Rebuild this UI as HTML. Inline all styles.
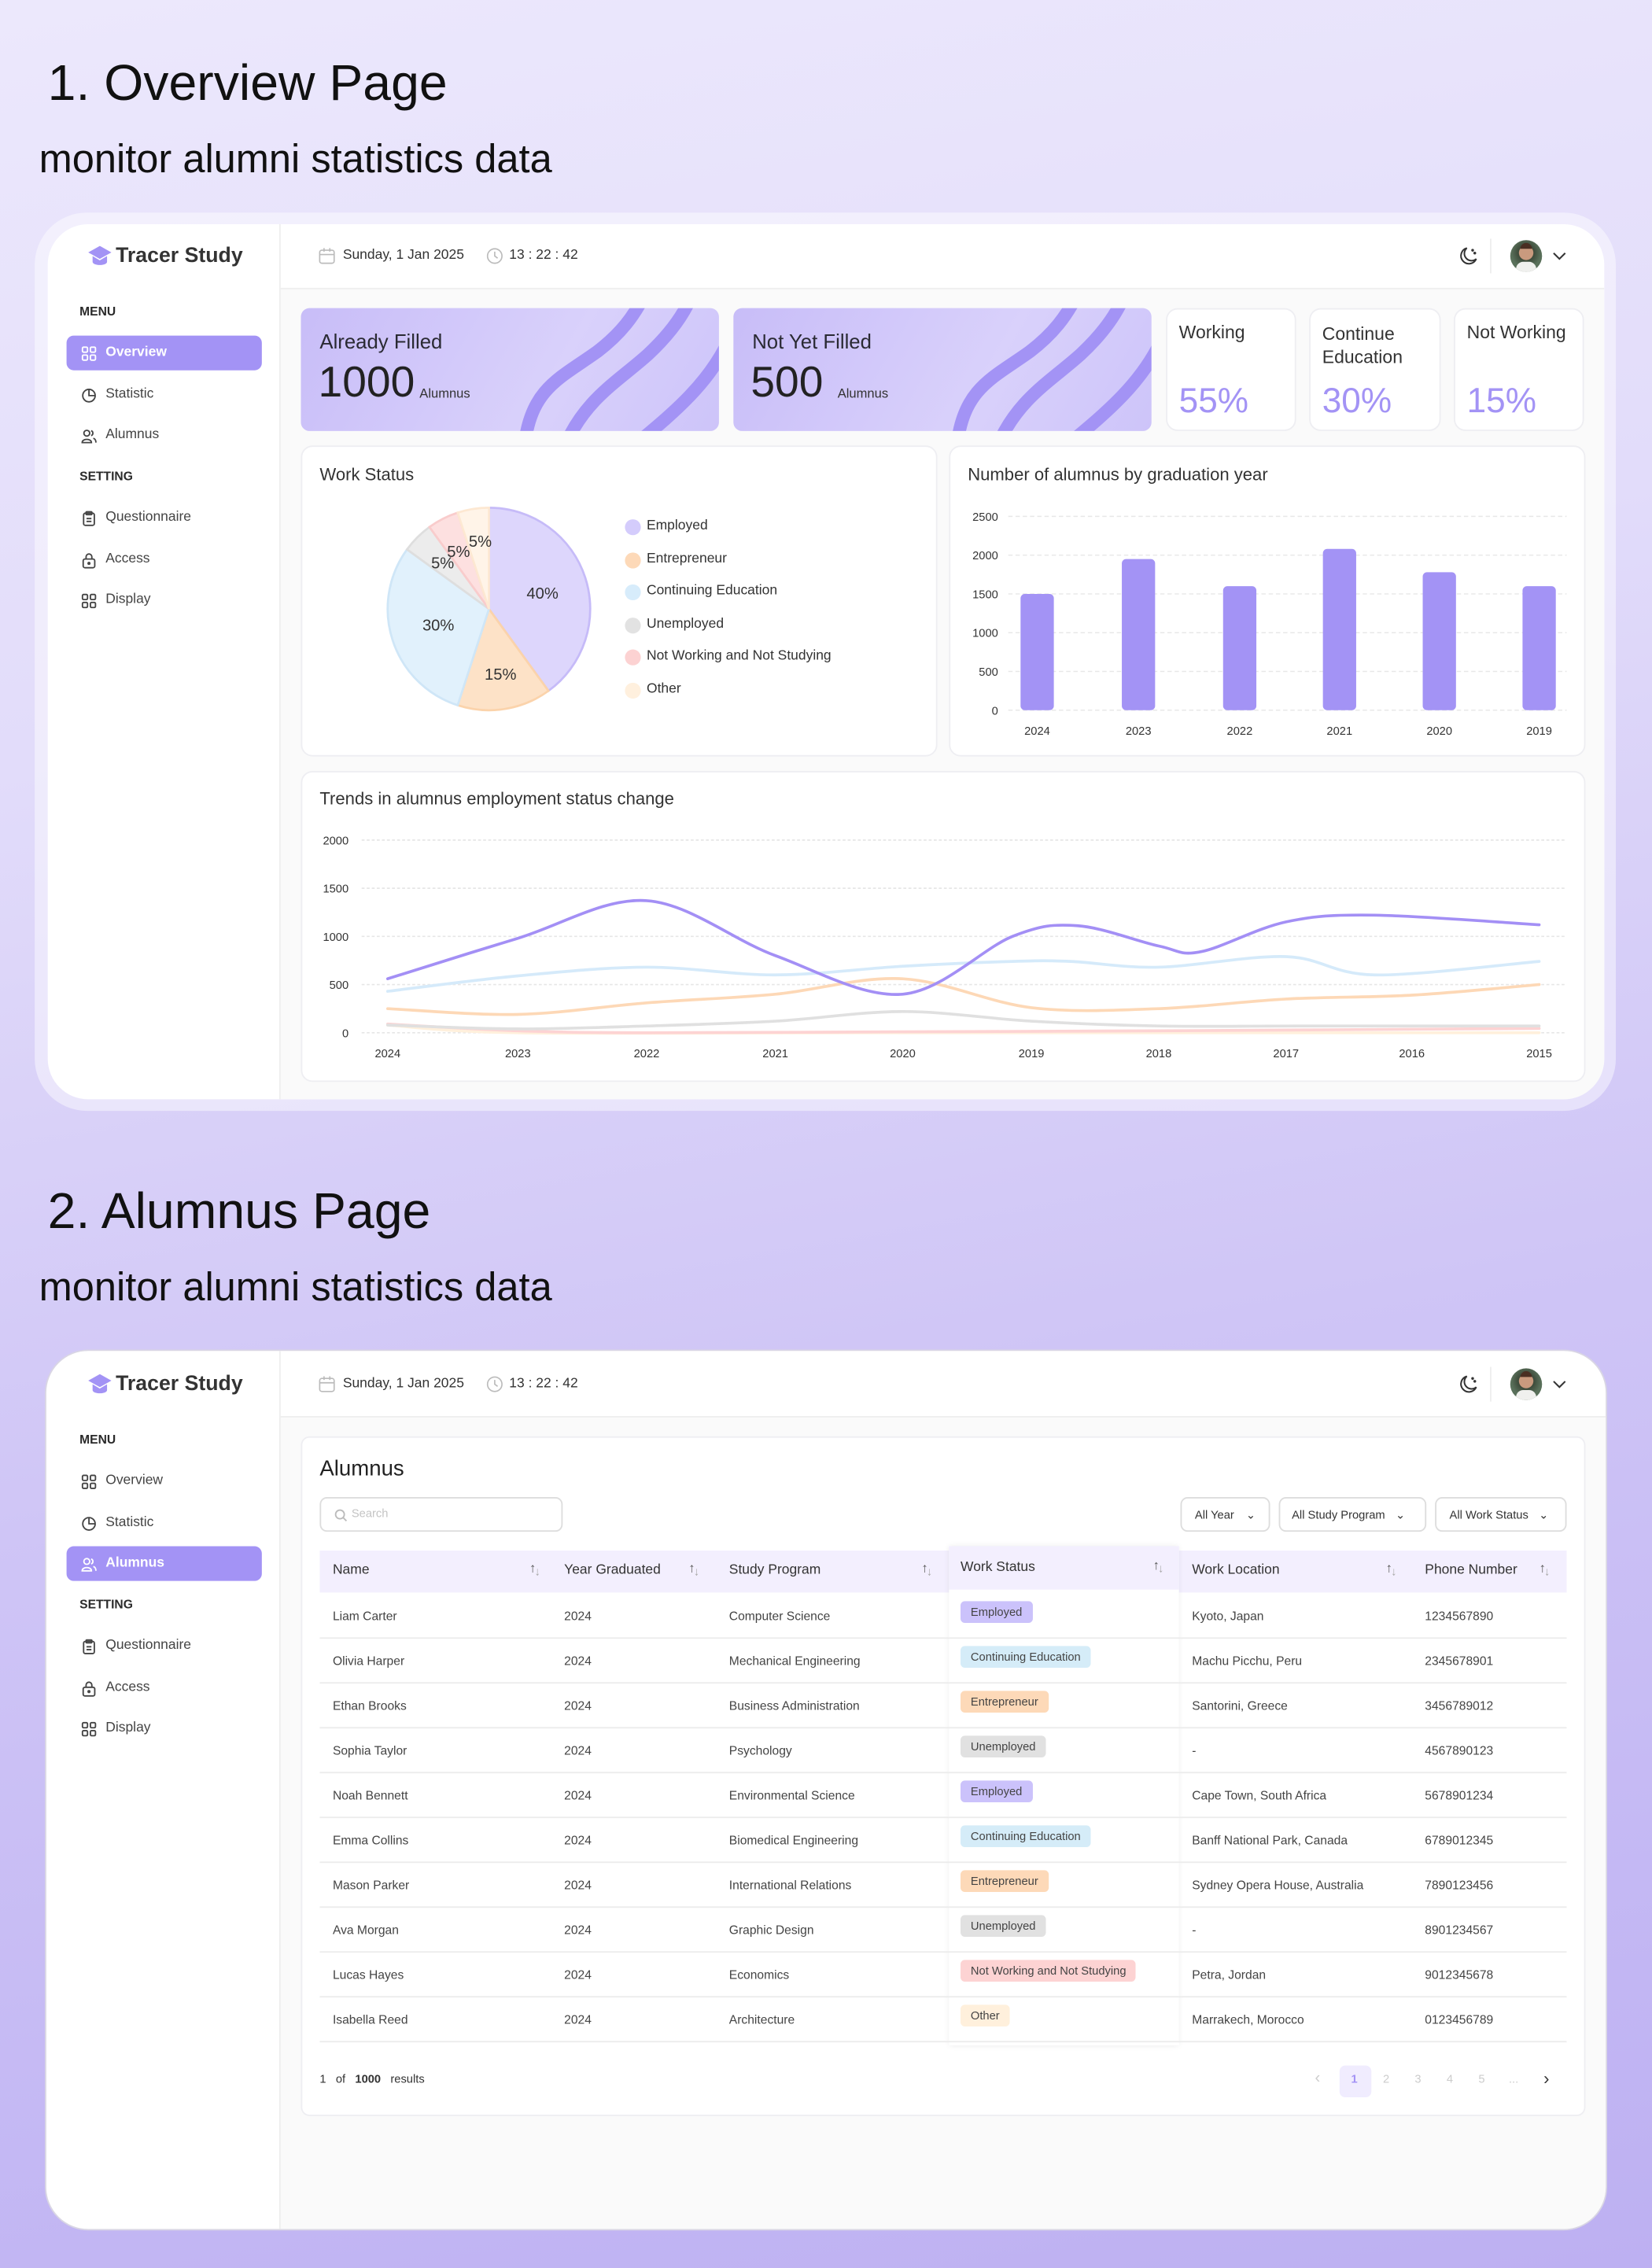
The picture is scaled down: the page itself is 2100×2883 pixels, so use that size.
<!DOCTYPE html>
<html><head><meta charset="utf-8">
<style>
*{box-sizing:border-box;margin:0;padding:0}
html,body{width:2100px;height:2883px;overflow:hidden}
body{background:linear-gradient(170deg,#ece8fc 0%,#e2dcfa 30%,#cfc5f6 60%,#bdb0f2 100%);font-family:"Liberation Sans",sans-serif;color:#2b2b33}
#w{position:absolute;left:0;top:0;width:1142px;height:1568px;transform:scale(1.83888,1.83865);transform-origin:0 0}
.a{position:absolute;white-space:nowrap}
.h1{font-size:35px;font-weight:500;color:#111;letter-spacing:0px}
.h2{font-size:27.5px;color:#111;letter-spacing:0px}
.card{position:absolute;background:#fff;border:1px solid #eeeef2;border-radius:8px}
.side .a{font-size:9.5px;color:#333}
.lbl{font-size:8.5px;font-weight:bold;color:#2a2a2a}
.t{font-size:9.5px;color:#333}
.sm{font-size:8px;color:#444}
.badge{position:absolute;font-size:8px;padding:3px 7px;border-radius:3px;color:#444;white-space:nowrap}
.hd{font-size:9.5px;color:#333}
.sort{font-size:9px;color:#555}
</style></head><body><div id="w">

<div class="a h1" style="left:33px;top:38px">1. Overview Page</div>
<div class="a h2" style="left:27px;top:94px">monitor alumni statistics data</div>
<div class="a h1" style="left:33px;top:818px">2. Alumnus Page</div>
<div class="a h2" style="left:27px;top:874px">monitor alumni statistics data</div>

<!-- frame 1 -->
<div class="a" style="left:24px;top:147px;width:1093px;height:621px;border-radius:36px;background:rgba(255,255,255,0.45)"></div>
<div class="a" style="left:33px;top:155px;width:1076px;height:605px;border-radius:28px;background:#fff;overflow:hidden">
  <div class="a" style="left:161px;top:45px;width:915px;height:560px;background:#fafafa"></div>
  <div class="a" style="left:160px;top:0;width:1px;height:605px;background:#eee"></div>
  <div class="a" style="left:161px;top:44px;width:915px;height:1px;background:#eee"></div>
</div>
<!-- frame 2 -->
<div class="a" style="left:31px;top:933px;width:1080px;height:609px;border-radius:30px;background:#fff;border:1.5px solid #d9d6e4;overflow:hidden">
  <div class="a" style="left:161px;top:45px;width:920px;height:570px;background:#fafafa"></div>
  <div class="a" style="left:161px;top:0;width:1px;height:609px;background:#eee"></div>
  <div class="a" style="left:162px;top:45px;width:918px;height:1px;background:#eee"></div>
</div>

<div id="s1"></div><div id="s2"></div>

<div class="a" style="left:208px;top:213px;width:289px;height:85px;border-radius:6px;background:linear-gradient(120deg,#c8bdf8,#d9d1fb 60%,#cdc4f9);overflow:hidden">
<svg class="a" style="left:0;top:0" width="289" height="85"><g fill="none" stroke="#a393f5" stroke-width="9"><path d="M155,92 C160,55 180,48 205,30 C222,17 230,5 236,-6"/><path d="M184,92 C198,62 220,50 240,32 C255,18 264,5 269,-6"/><path d="M234,92 C258,72 282,52 296,22"/></g></svg>
<div class="a" style="left:13px;top:15px;font-size:14px;color:#2a2a33">Already Filled</div>
<div class="a" style="left:12px;top:35px;font-size:30px;font-weight:500;color:#222">1000</div>
<div class="a" style="left:82px;top:54px;font-size:9px;color:#333">Alumnus</div>
</div>
<div class="a" style="left:507px;top:213px;width:289px;height:85px;border-radius:6px;background:linear-gradient(120deg,#c8bdf8,#d9d1fb 60%,#cdc4f9);overflow:hidden">
<svg class="a" style="left:0;top:0" width="289" height="85"><g fill="none" stroke="#a393f5" stroke-width="9"><path d="M155,92 C160,55 180,48 205,30 C222,17 230,5 236,-6"/><path d="M184,92 C198,62 220,50 240,32 C255,18 264,5 269,-6"/><path d="M234,92 C258,72 282,52 296,22"/></g></svg>
<div class="a" style="left:13px;top:15px;font-size:14px;color:#2a2a33">Not Yet Filled</div>
<div class="a" style="left:12px;top:35px;font-size:30px;font-weight:500;color:#222">500</div>
<div class="a" style="left:72px;top:54px;font-size:9px;color:#333">Alumnus</div>
</div>
<div class="card" style="left:806px;top:213px;width:90px;height:85px"><div class="a" style="left:8px;top:9px;font-size:12.5px;color:#333">Working</div><div class="a" style="left:8px;top:50px;font-size:24px;color:#a393f5">55%</div></div>
<div class="card" style="left:905px;top:213px;width:91px;height:85px"><div class="a" style="left:8px;top:9px;font-size:12.5px;color:#333;line-height:16px">Continue<br>Education</div><div class="a" style="left:8px;top:50px;font-size:24px;color:#a393f5">30%</div></div>
<div class="card" style="left:1005px;top:213px;width:90px;height:85px"><div class="a" style="left:8px;top:9px;font-size:12.5px;color:#333">Not Working</div><div class="a" style="left:8px;top:50px;font-size:24px;color:#a393f5">15%</div></div>

<div class="card" style="left:208px;top:308px;width:440px;height:215px"></div>
<div class="a" style="left:221px;top:321px;font-size:12px;color:#333">Work Status</div>
<svg class="a" style="left:0;top:0" width="700" height="560" id="pie"></svg>
<div id="legend"></div>

<div class="card" style="left:656px;top:308px;width:440px;height:215px"></div>
<div class="a" style="left:669px;top:321px;font-size:12px;color:#333">Number of alumnus by graduation year</div>
<svg class="a" style="left:0;top:0" width="1142" height="760" id="bars"></svg>

<div class="card" style="left:208px;top:533px;width:888px;height:215px"></div>
<div class="a" style="left:221px;top:545px;font-size:12px;color:#333">Trends in alumnus employment status change</div>
<svg class="a" style="left:0;top:0" width="1142" height="760" id="trend"></svg>

<div class="card" style="left:208px;top:993px;width:888px;height:470px;border-radius:6px"></div>
<div class="a" style="left:221px;top:1007px;font-size:15px;color:#222">Alumnus</div>
<div class="a" style="left:221px;top:1035px;width:168px;height:24px;border:1px solid #ddd;border-radius:5px"></div>
<svg class="a" style="left:231px;top:1043px" width="9" height="9"><circle cx="4" cy="4" r="3" fill="none" stroke="#bbb" stroke-width="1"/><path d="M6.2,6.2 L8.5,8.5" stroke="#bbb"/></svg>
<div class="a" style="left:243px;top:1042px;font-size:8px;color:#c4c4c4">Search</div>
<div class="a" style="left:816px;top:1035px;width:62px;height:24px;border:1px solid #ddd;border-radius:5px;font-size:8px;color:#333;padding:7px 0 0 9px">All Year <span style="margin-left:6px">⌄</span></div>
<div class="a" style="left:884px;top:1035px;width:102px;height:24px;border:1px solid #ddd;border-radius:5px;font-size:8px;color:#333;padding:7px 0 0 8px">All Study Program <span style="margin-left:5px">⌄</span></div>
<div class="a" style="left:992px;top:1035px;width:91px;height:24px;border:1px solid #ddd;border-radius:5px;font-size:8px;color:#333;padding:7px 0 0 9px">All Work Status <span style="margin-left:5px">⌄</span></div>
<div class="a" style="left:221px;top:1072px;width:862px;height:29px;background:#f3effe"></div>
<div class="a" style="left:656px;top:1069px;width:159px;height:345px;background:#fff;box-shadow:0 0 4px rgba(0,0,0,0.08)"></div>
<div class="a" style="left:656px;top:1069px;width:159px;height:30px;background:#f3effe"></div>
<div id="tbl"></div>
<div class="a" style="left:221px;top:1433px;font-size:8px;color:#333">1 &nbsp;&nbsp;of &nbsp;&nbsp;<b>1000</b> &nbsp;&nbsp;results</div>
<div class="a" style="left:926px;top:1428px;width:22px;height:22px;border-radius:4px;background:#f0ecfe"></div>
<div class="a" style="left:909px;top:1431px;font-size:11px;color:#ccc">‹</div>
<div class="a" style="left:934px;top:1433px;font-size:8px;color:#a393f5;font-weight:bold">1</div>
<div class="a" style="left:956px;top:1433px;font-size:8px;color:#ccc">2</div>
<div class="a" style="left:978px;top:1433px;font-size:8px;color:#ccc">3</div>
<div class="a" style="left:1000px;top:1433px;font-size:8px;color:#ccc">4</div>
<div class="a" style="left:1022px;top:1433px;font-size:8px;color:#ccc">5</div>
<div class="a" style="left:1043px;top:1433px;font-size:8px;color:#ccc">...</div>
<div class="a" style="left:1067px;top:1430px;font-size:12px;color:#333">›</div>

<script>
function sidebar(off, active){
 var ic={
 grid:'<rect x="1" y="1" width="3.5" height="3.5" rx="0.8"/><rect x="6.5" y="1" width="3.5" height="3.5" rx="0.8"/><rect x="1" y="6.5" width="3.5" height="3.5" rx="0.8"/><rect x="6.5" y="6.5" width="3.5" height="3.5" rx="0.8"/>',
 pie:'<circle cx="5.5" cy="5.5" r="4.3"/><path d="M5.5,1.2 V5.5 H9.8"/>',
 users:'<circle cx="4" cy="3.5" r="2"/><path d="M0.8,10 C0.8,7 7.2,7 7.2,10 Z"/><path d="M7,1.8 A1.8,1.8 0 0 1 7,5.2 M8.5,7 C10,7.5 10.3,8.5 10.3,10"/>',
 clip:'<rect x="1.8" y="1.8" width="7.4" height="8.4" rx="1.2"/><rect x="3.5" y="0.8" width="4" height="2" rx="0.5"/><path d="M3.8,5.5 H7.2 M3.8,7.5 H7.2"/>',
 lock:'<rect x="1.5" y="4.5" width="8" height="6" rx="1.2"/><path d="M3.5,4.5 V3 A2,2 0 0 1 7.5,3 V4.5"/><circle cx="5.5" cy="7.5" r="0.6"/>'
 };
 function svg(n,c){return '<svg class="a" width="11" height="11" style="left:0;top:0;overflow:visible" fill="none" stroke="'+c+'" stroke-width="1">'+ic[n]+'</svg>';}
 var items=[['Overview','grid',244],['Statistic','pie',273],['Alumnus','users',301],['Questionnaire','clip',358],['Access','lock',387],['Display','grid',415]];
 var h='';
 h+='<svg class="a" style="left:60px;top:'+(169+off)+'px" width="18" height="17"><path d="M9,1 L17,5.5 L9,10 L1,5.5 Z" fill="#a393f5"/><path d="M4,8 V12 C4,15 14,15 14,12 V8 L9,11 Z" fill="#a393f5"/></svg>';
 h+='<div class="a" style="left:80px;top:'+(169+off)+'px;font-size:14.5px;font-weight:bold;color:#333">Tracer Study</div>';
 h+='<div class="a lbl" style="left:55px;top:'+(210+off)+'px">MENU</div>';
 h+='<div class="a lbl" style="left:55px;top:'+(324+off)+'px">SETTING</div>';
 items.forEach(function(it){
   var y=it[2]+off, act=it[0]==active;
   if(act) h+='<div class="a" style="left:46px;top:'+(y-12)+'px;width:135px;height:24px;border-radius:5px;background:#a393f5"></div>';
   var c=act?'#fff':'#444';
   h+='<div class="a" style="left:56px;top:'+(y-5.5)+'px;width:11px;height:11px">'+svg(it[1],c)+'</div>';
   h+='<div class="a" style="left:73px;top:'+(y-6)+'px;font-size:9.5px;color:'+c+(act?';font-weight:bold':'')+'">'+it[0]+'</div>';
 });
 var hy=177+off;
 h+='<svg class="a" style="left:220px;top:'+(hy-6)+'px" width="12" height="12" fill="none" stroke="#bbb" stroke-width="0.9"><rect x="1" y="2" width="10" height="9" rx="1.5"/><path d="M1,5 H11 M4,0.5 V3 M8,0.5 V3"/></svg>';
 h+='<div class="a" style="left:237px;top:'+(hy-6)+'px;font-size:9.5px;color:#333">Sunday, 1 Jan 2025</div>';
 h+='<svg class="a" style="left:336px;top:'+(hy-6)+'px" width="12" height="12" fill="none" stroke="#bbb" stroke-width="0.9"><circle cx="6" cy="6" r="5"/><path d="M6,3 V6 L8,7.5"/></svg>';
 h+='<div class="a" style="left:352px;top:'+(hy-6)+'px;font-size:9.5px;color:#333">13 : 22 : 42</div>';
 h+='<svg class="a" style="left:1008px;top:'+(hy-7)+'px" width="14" height="14" fill="none" stroke="#333" stroke-width="1.1"><path d="M6,1.5 A5.5,5.5 0 1 0 12.5,9 A4.5,4.5 0 0 1 6,1.5 Z"/><circle cx="10" cy="3" r="0.4" fill="#333"/><circle cx="11.5" cy="5" r="0.4" fill="#333"/></svg>';
 h+='<div class="a" style="left:1030px;top:'+(hy-12)+'px;width:1px;height:24px;background:#eee"></div>';
 h+='<div class="a" style="left:1044px;top:'+(hy-11)+'px;width:22px;height:22px;border-radius:50%;overflow:hidden;background:radial-gradient(circle at 50% 40%,#c99a7e 0 28%,#3d4a3a 30%,#59705a 60%)"><div class="a" style="left:4px;top:15px;width:14px;height:10px;border-radius:6px;background:#f0f0ee"></div><div class="a" style="left:7px;top:2px;width:8px;height:4px;border-radius:4px 4px 0 0;background:#4a2e22"></div></div>';
 h+='<svg class="a" style="left:1073px;top:'+(hy-3)+'px" width="10" height="6" fill="none" stroke="#333" stroke-width="1.1"><path d="M1,1 L5,5 L9,1"/></svg>';
 return h;
}
document.getElementById('s1').innerHTML=sidebar(0,'Overview');
document.getElementById('s2').innerHTML=sidebar(780,'Alumnus');

(function(){
 var cx=338,cy=421,r=70,segs=[[.40,'#ddd6fc','#c6bbf8'],[.15,'#fde2c7','#fbd3ab'],[.30,'#e1f1fc','#cfe6f7'],[.05,'#ececec','#dedede'],[.05,'#fde0e0','#f9cccc'],[.05,'#fff4e8','#fde8d2']];
 var a=0,s='';
 segs.forEach(function(g){
  var a1=a*2*Math.PI,a2=(a+g[0])*2*Math.PI;
  var x1=cx+r*Math.sin(a1),y1=cy-r*Math.cos(a1),x2=cx+r*Math.sin(a2),y2=cy-r*Math.cos(a2);
  s+='<path d="M'+cx+','+cy+' L'+x1+','+y1+' A'+r+','+r+' 0 '+(g[0]>.5?1:0)+' 1 '+x2+','+y2+' Z" fill="'+g[1]+'" stroke="'+g[2]+'" stroke-width="1.5"/>';
  a+=g[0];
 });
 var t=[['40%',375,414],['15%',346,470],['30%',303,436],['5%',306,393],['5%',317,385],['5%',332,378]];
 t.forEach(function(x){s+='<text x="'+x[1]+'" y="'+x[2]+'" font-size="11" fill="#333" text-anchor="middle" font-family="Liberation Sans">'+x[0]+'</text>';});
 document.getElementById('pie').innerHTML=s;
 var L=[['Employed','#d4ccfc'],['Entrepreneur','#fdd9b8'],['Continuing Education','#d7ecfb'],['Unemployed','#e2e2e2'],['Not Working and Not Studying','#fcd2d2'],['Other','#fff0de']],h='';
 L.forEach(function(l,i){var y=364+i*22.6;h+='<div class="a" style="left:432px;top:'+(y-5)+'px;width:11px;height:11px;border-radius:50%;background:'+l[1]+'"></div><div class="a" style="left:447px;top:'+(y-6)+'px;font-size:9.5px;color:#333">'+l[0]+'</div>';});
 document.getElementById('legend').innerHTML=h;
})();

(function(){
 var s='',vals=[['2024',1500,717],['2023',1950,787],['2022',1600,857],['2021',2080,926],['2020',1780,995],['2019',1600,1064]];
 for(var i=0;i<=5;i++){var y=491-i*26.8;s+='<line x1="697" x2="1083" y1="'+y+'" y2="'+y+'" stroke="#e8e8e8" stroke-dasharray="3,2" stroke-width="0.8"/><text x="690" y="'+(y+3)+'" font-size="8" fill="#333" text-anchor="end" font-family="Liberation Sans">'+(i*500)+'</text>';}
 vals.forEach(function(v){var h=v[1]*26.8/500;s+='<rect x="'+(v[2]-11.5)+'" y="'+(491-h)+'" width="23" height="'+h+'" rx="3" fill="#a393f5"/><text x="'+v[2]+'" y="508" font-size="8" fill="#333" text-anchor="middle" font-family="Liberation Sans">'+v[0]+'</text>';});
 document.getElementById('bars').innerHTML=s;
})();

(function(){
 var s='',yr=['2024','2023','2022','2021','2020','2019','2018','2017','2016','2015'],xs=[268,358,447,536,624,713,801,889,976,1064];
 function Y(v){return 714-v*0.06665;}
 for(var i=0;i<=4;i++){var y=714-i*33.3;s+='<line x1="250" x2="1083" y1="'+y+'" y2="'+y+'" stroke="#e6e6e6" stroke-dasharray="2,1.5" stroke-width="0.9"/><text x="241" y="'+(y+3)+'" font-size="8" fill="#333" text-anchor="end" font-family="Liberation Sans">'+(i*500)+'</text>';}
 xs.forEach(function(x,i){s+='<text x="'+x+'" y="731" font-size="8" fill="#333" text-anchor="middle" font-family="Liberation Sans">'+yr[i]+'</text>';});
 function cr(p){var d='M'+p[0][0]+','+Y(p[0][1]);for(var i=0;i<p.length-1;i++){var p0=p[i-1]||p[i],p1=p[i],p2=p[i+1],p3=p[i+2]||p2;var c1x=p1[0]+(p2[0]-p0[0])/6,c1y=Y(p1[1])+(Y(p2[1])-Y(p0[1]))/6,c2x=p2[0]-(p3[0]-p1[0])/6,c2y=Y(p2[1])-(Y(p3[1])-Y(p1[1]))/6;d+=' C'+c1x+','+c1y+' '+c2x+','+c2y+' '+p2[0]+','+Y(p2[1]);}return d;}
 var lines=[
 ['#fff0dc',[[268,80],[358,0],[600,0],[1064,0]]],
 ['#fdd3d3',[[268,90],[358,20],[447,0],[624,10],[801,20],[1064,45]]],
 ['#e0e0e0',[[268,80],[358,40],[447,70],[536,120],[624,220],[713,120],[801,70],[900,70],[1064,70]]],
 ['#fdd8b6',[[268,250],[358,190],[447,310],[536,400],[624,560],[713,260],[801,250],[889,350],[976,390],[1064,500]]],
 ['#d5eafa',[[268,430],[358,590],[447,680],[536,600],[624,690],[700,740],[740,740],[801,680],[889,790],[950,600],[1064,740]]],
 ['#a38ff5',[[268,560],[358,980],[447,1370],[536,800],[624,400],[700,1000],[745,1110],[801,900],[830,840],[889,1150],[950,1220],[1064,1120]]]];
 lines.forEach(function(l){s+='<path d="'+cr(l[1])+'" fill="none" stroke="'+l[0]+'" stroke-width="2" stroke-linecap="round"/>';});
 document.getElementById('trend').innerHTML=s;
})();

(function(){
 var rows=[['Liam Carter','Computer Science','Employed','Kyoto, Japan','1234567890'],['Olivia Harper','Mechanical Engineering','Continuing Education','Machu Picchu, Peru','2345678901'],['Ethan Brooks','Business Administration','Entrepreneur','Santorini, Greece','3456789012'],['Sophia Taylor','Psychology','Unemployed','-','4567890123'],['Noah Bennett','Environmental Science','Employed','Cape Town, South Africa','5678901234'],['Emma Collins','Biomedical Engineering','Continuing Education','Banff National Park, Canada','6789012345'],['Mason Parker','International Relations','Entrepreneur','Sydney Opera House, Australia','7890123456'],['Ava Morgan','Graphic Design','Unemployed','-','8901234567'],['Lucas Hayes','Economics','Not Working and Not Studying','Petra, Jordan','9012345678'],['Isabella Reed','Architecture','Other','Marrakech, Morocco','0123456789']];
 var col={'Employed':'#cbc2fb','Continuing Education':'#d5ecf8','Entrepreneur':'#fdd9b8','Unemployed':'#e1e1e1','Not Working and Not Studying':'#fdd3d3','Other':'#fff0dc'};
 var h='',hs=[['Name',230,366,1086],['Year Graduated',390,476,1086],['Study Program',504,637,1086],['Work Status',664,797,1084],['Work Location',824,958,1086],['Phone Number',985,1064,1086]];
 hs.forEach(function(c){h+='<div class="a hd" style="left:'+c[1]+'px;top:'+(c[3]-6)+'px">'+c[0]+'</div><div class="a sort" style="left:'+c[2]+'px;top:'+(c[3]-7)+'px">↑<span style="color:#aaa;font-size:8px;position:relative;top:2px;margin-left:-1px">↓</span></div>';});
 rows.forEach(function(r,i){var y=1117+i*31;
  h+='<div class="a" style="left:221px;top:'+(y+15)+'px;width:862px;height:1px;background:#ececec"></div>';
  h+='<div class="a sm" style="left:230px;top:'+(y-5)+'px;font-size:8.5px">'+r[0]+'</div>';
  h+='<div class="a sm" style="left:390px;top:'+(y-5)+'px;font-size:8.5px">2024</div>';
  h+='<div class="a sm" style="left:504px;top:'+(y-5)+'px;font-size:8.5px">'+r[1]+'</div>';
  h+='<div class="badge" style="left:664px;top:'+(y-10)+'px;background:'+col[r[2]]+'">'+r[2]+'</div>';
  h+='<div class="a sm" style="left:824px;top:'+(y-5)+'px;font-size:8.5px">'+r[3]+'</div>';
  h+='<div class="a sm" style="left:985px;top:'+(y-5)+'px;font-size:8.5px">'+r[4]+'</div>';
 });
 document.getElementById('tbl').innerHTML=h;
})();
</script>
</div></body></html>
